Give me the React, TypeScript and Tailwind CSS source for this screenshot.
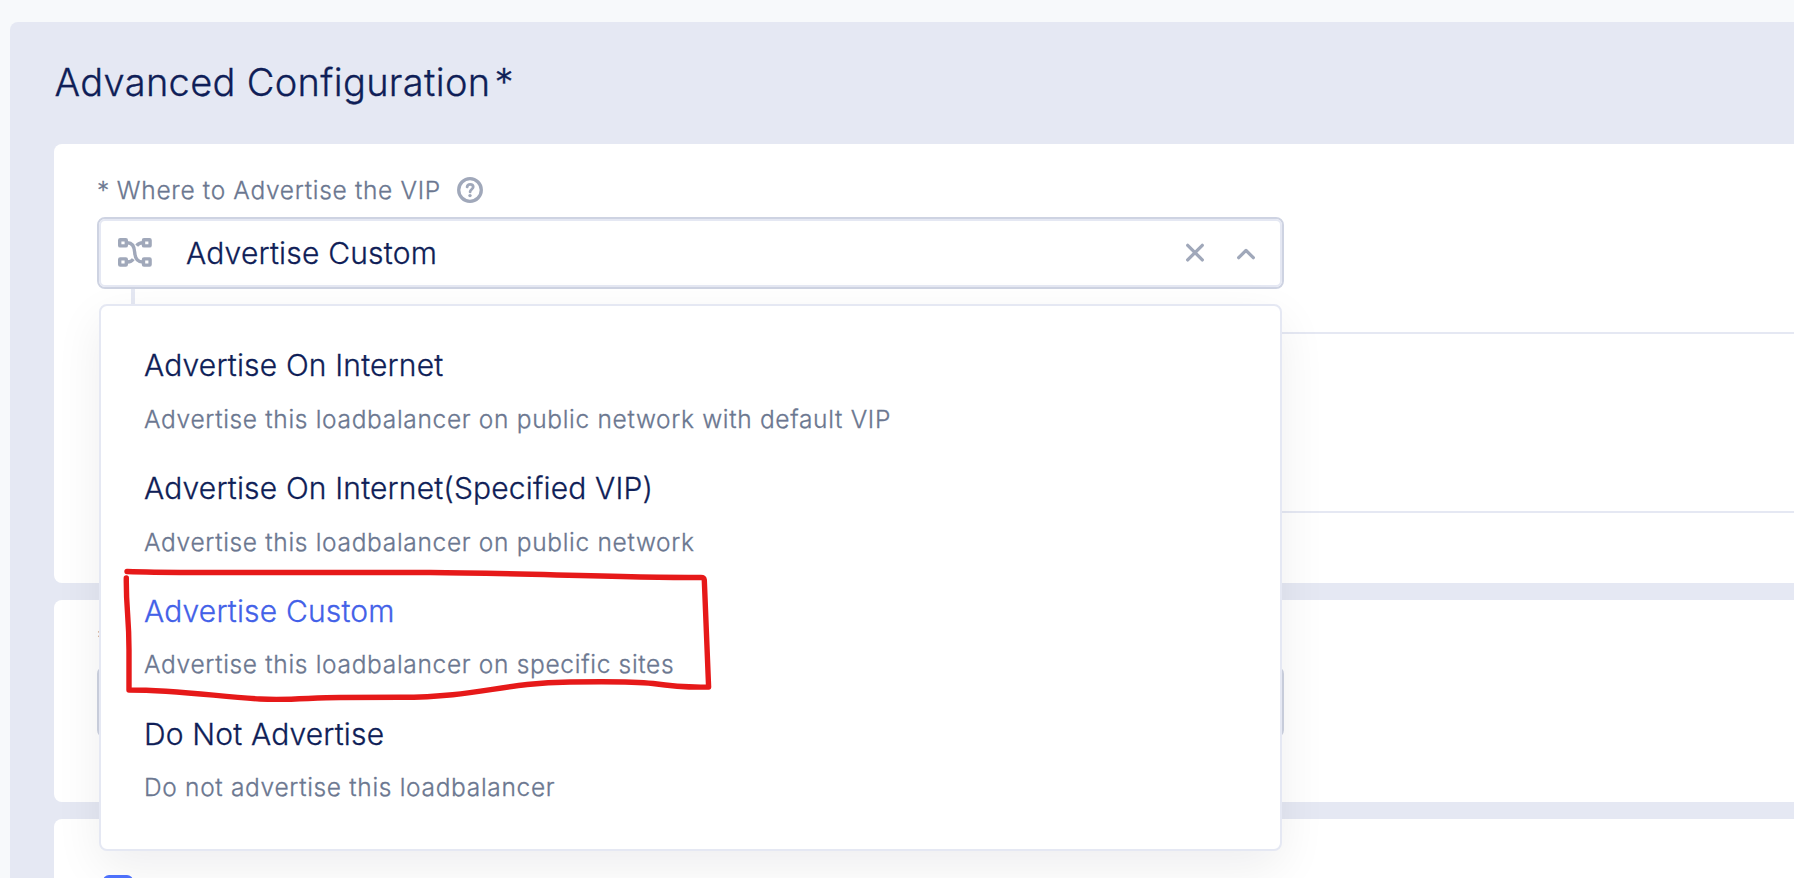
const OPTIONS = [
  {
    title: 'Advertise On Internet',
    description: 'Advertise this loadbalancer on public network with default VIP',
  },
  {
    title: 'Advertise On Internet(Specified VIP)',
    description: 'Advertise this loadbalancer on public network',
  },
  {
    title: 'Advertise Custom',
    description: 'Advertise this loadbalancer on specific sites',
    selected: true,
  },
  {
    title: 'Do Not Advertise',
    description: 'Do not advertise this loadbalancer',
  },
];

function HelpIcon() {
  return (
    <svg className="size-[26px]" viewBox="0 0 26 26" fill="none" stroke="#a0a8ba" strokeLinecap="round">
      <circle cx="13" cy="13" r="11.3" strokeWidth="3.3" />
      <path d="M10.1 9.900c.3-1.700 1.500-2.500 3-2.500 1.800 0 3.100 1 3.100 2.700 0 2-2.900 2.300-3.100 4.700" strokeWidth="2.800" />
      <circle cx="13" cy="18.600" r="1.700" fill="#a0a8ba" stroke="none" />
    </svg>
  );
}

function RouteIcon() {
  return (
    <svg className="h-[30px] w-[34px]" viewBox="0 0.5 34 30" fill="none" stroke="#a0a8ba" strokeWidth="3.4">
      <rect x="1.700" y="2.200" width="6.600" height="6.200" rx="0.500" />
      <rect x="25.500" y="2.200" width="6.600" height="6.200" rx="0.500" />
      <rect x="1.700" y="21.400" width="6.600" height="6.200" rx="0.500" />
      <rect x="25.500" y="21.400" width="6.600" height="6.200" rx="0.500" />
      <path d="M9.500 5.300c5 0 6.800 3.200 7.200 9.600.4 6.600 2.800 9.600 8 9.600" strokeWidth="3.4" />
      <path d="M25 5.300c-2.800 0-4.800.8-6.300 3" strokeWidth="3.4" />
      <path d="M9.500 24.500c2.600 0 4.400-.7 5.800-2.900" strokeWidth="3.4" />
    </svg>
  );
}

function ClearIcon() {
  return (
    <svg className="size-[20px]" viewBox="0 0.4 20 20" fill="none" stroke="#a0a8ba" strokeWidth="3.300" strokeLinecap="round">
      <path d="M2.700 2.700l14.600 14.600M17.300 2.700L2.700 17.300" />
    </svg>
  );
}

function ChevronUpIcon() {
  return (
    <svg className="size-[20px]" viewBox="0 -0.4 20 20" fill="none" stroke="#a0a8ba" strokeWidth="3.300" strokeLinecap="round" strokeLinejoin="round">
      <path d="M2.700 14.300L10 7l7.300 7.300" />
    </svg>
  );
}

function Highlight() {
  return (
    <svg
      className="pointer-events-none absolute top-[346px] left-[21px] h-[144px] w-[600px]"
      viewBox="120 565 600 144"
      fill="none"
      stroke="#e61919"
      strokeWidth="5.4"
      strokeLinecap="round"
      strokeLinejoin="round"
    >
      <path d="M127 571.500Q150 572.300 190 572.500L430 572.500C520 573 610 577.500 701 577.500Q704 577.500 704.300 580L708.600 687C690 687.500 670 686 653 683.500C630 681 600 681.500 570 682C500 683 480 697 400 697.300L340 697.500C310 697.700 290 700.500 260 699C220 697 180 690 129 690L129 650C129 615 126 610 126.300 578" />
    </svg>
  );
}

function Dropdown() {
  return (
    <div className="absolute top-[85px] left-0 h-[547px] w-[1183px] rounded-lg border-2 border-[#e5e8f3] bg-white pt-[39.2px] pl-[43px] shadow-[0_16px_48px_rgba(10,15,35,0.07)]">
      <ul className="flex flex-col gap-[33.2px]">
        {OPTIONS.map((option) => (
          <li key={option.title} className="flex flex-col gap-[17.6px] whitespace-nowrap">
            <span
              className={
                option.selected
                  ? 'text-[30px] leading-[40px] tracking-[0.17px] text-[#4361e8]'
                  : 'text-[30px] leading-[40px] tracking-[0.17px] text-[#0f1e57]'
              }
            >
              {option.title}
            </span>
            <span className="text-[24.5px] leading-[32px] tracking-[0.68px] text-[#6b7790]">
              {option.description}
            </span>
          </li>
        ))}
      </ul>
    </div>
  );
}

export default function App() {
  return (
    <div className="h-[878px] w-full overflow-hidden bg-[#f7f9fb] pt-[22px] pl-[10px] font-['Inter',sans-serif] font-light [-webkit-text-stroke-width:0.3px]">
      <section className="h-[900px] rounded-tl-lg bg-[#e5e8f3] pt-9 pl-[44px]">
        <h1 className="pl-[0.5px] text-[38px] leading-[48px] font-light tracking-[0.33px] text-[#0f1e57]">
          Advanced Configuration<span className="ml-[4px]">*</span>
        </h1>

        <div className="mt-[38px] flex flex-col gap-[17px]">
          <div className="h-[439px] rounded-l-lg bg-white pt-[30px] pl-[43px]">
            <div className="flex h-8 items-center text-[24.5px] leading-8 tracking-[0.73px] text-[#6b7790]">
              <span className="[word-spacing:-0.2px]">
                *<span className="-ml-[0.6px]"> Where to Advertise the VIP</span>
              </span>
              <span className="ml-[16px]">
                <HelpIcon />
              </span>
            </div>

            <div className="relative mt-[11px] w-[1187px]">
              <div className="rounded-lg border-2 border-[#ced3e2]">
                <div className="flex h-[68px] items-center rounded-md border-2 border-[#e5e8f3] bg-white pr-[24px] pl-[17px]">
                  <RouteIcon />
                  <span className="ml-[34px] flex-1 text-[30px] leading-[40px] tracking-[0.2px] text-[#0f1e57]">
                    Advertise Custom
                  </span>
                  <ClearIcon />
                  <span className="ml-[31px]">
                    <ChevronUpIcon />
                  </span>
                </div>
              </div>
              <div className="absolute top-[2px] left-[2px] z-10">
                <Dropdown />
                <Highlight />
              </div>
            </div>

            <div className="ml-[34px] h-[223px] border-l-4 border-[#e5e8f3] pt-[43px]">
              <div className="h-[181px] border-y-2 border-[#e5e8f3]" />
            </div>
          </div>

          <div className="h-[202px] rounded-l-lg bg-white pt-[22px] pl-[43px]">
            <div className="h-8 text-[24.5px] leading-8 text-[#6b7790]">*</div>
            <div className="mt-[12px] h-[72px] w-[1187px] rounded-lg border-2 border-[#ced3e2]" />
          </div>

          <div className="h-[160px] rounded-l-lg bg-white pt-[56px] pl-[49px]">
            <div className="size-[30px] rounded-md bg-[#4f73ff]" />
          </div>
        </div>
      </section>
    </div>
  );
}
